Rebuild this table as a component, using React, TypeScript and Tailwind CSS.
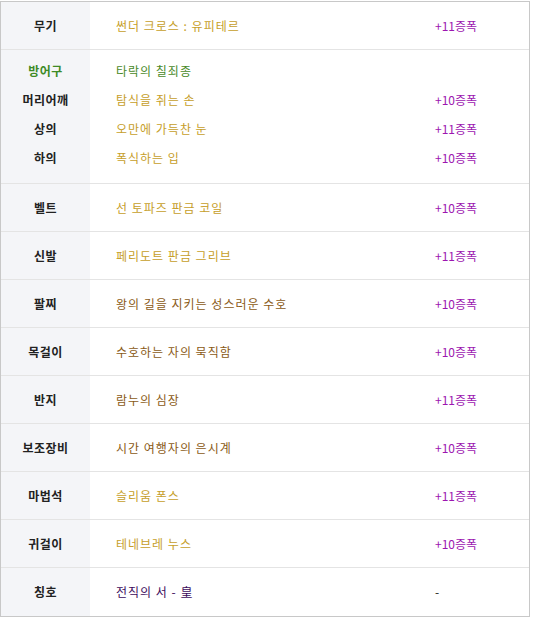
import React from 'react';

type Item = {
  label: string;
  name: string;
  value: string;
  labelClass?: string;
  nameClass: string;
  valueClass?: string;
};

const GOLD = 'text-[#c69e2a]';
const BROWN = 'text-[#8a5a16]';
const PURPLE = 'text-[#9c16b0]';

const armor: Item[] = [
  { label: '방어구', name: '타락의 칠죄종', value: '', labelClass: 'text-[#3d8b26]', nameClass: 'text-[#4a8a2a]' },
  { label: '머리어깨', name: '탐식을 쥐는 손', value: '+10증폭', nameClass: GOLD },
  { label: '상의', name: '오만에 가득찬 눈', value: '+11증폭', nameClass: GOLD },
  { label: '하의', name: '폭식하는 입', value: '+10증폭', nameClass: GOLD },
];

const rows: Item[] = [
  { label: '벨트', name: '선 토파즈 판금 코일', value: '+10증폭', nameClass: GOLD },
  { label: '신발', name: '페리도트 판금 그리브', value: '+11증폭', nameClass: GOLD },
  { label: '팔찌', name: '왕의 길을 지키는 성스러운 수호', value: '+10증폭', nameClass: BROWN },
  { label: '목걸이', name: '수호하는 자의 묵직함', value: '+10증폭', nameClass: BROWN },
  { label: '반지', name: '람누의 심장', value: '+11증폭', nameClass: BROWN },
  { label: '보조장비', name: '시간 여행자의 은시계', value: '+10증폭', nameClass: BROWN },
  { label: '마법석', name: '슬리움 폰스', value: '+11증폭', nameClass: GOLD },
  { label: '귀걸이', name: '테네브레 누스', value: '+10증폭', nameClass: GOLD },
  { label: '칭호', name: '전직의 서 - 皇', value: '-', nameClass: 'text-[#3c0a5c]', valueClass: 'text-[#222]' },
];

const Row: React.FC<{ item: Item; last?: boolean }> = ({ item, last }) => (
  <div className={`flex h-[48px] ${last ? '' : 'border-b border-[#e4e4e4]'}`}>
    <div
      className={`flex w-[89px] items-center justify-center bg-[#f4f5f8] text-[12px] font-bold tracking-[0.5px] ${item.labelClass ?? 'text-[#222]'}`}
    >
      {item.label}
    </div>
    <div className={`flex w-[345px] items-center pl-[26px] tracking-[1px] ${item.nameClass}`}>{item.name}</div>
    <div className={`flex flex-1 items-center ${item.valueClass ?? PURPLE}`}>{item.value}</div>
  </div>
);

export default function App() {
  return (
    <div className="min-h-screen bg-white pt-[1px] text-[12px] font-['Noto_Sans_CJK_KR',sans-serif]">
      <div className="w-[530px] border border-[#c8c8c8]">
        <Row item={{ label: '무기', name: '썬더 크로스 : 유피테르', value: '+11증폭', nameClass: GOLD }} />

        {/* armor set block */}
        <div className="flex border-b border-[#e4e4e4] leading-[29px]">
          <div className="w-[89px] bg-[#f4f5f8] pb-[11px] pt-[6px] text-center text-[12px] font-bold tracking-[0.5px]">
            {armor.map((a) => (
              <div key={a.label} className={a.labelClass ?? 'text-[#222]'}>
                {a.label}
              </div>
            ))}
          </div>
          <div className="w-[345px] pb-[11px] pl-[26px] pt-[6px] tracking-[1px]">
            {armor.map((a) => (
              <div key={a.label} className={a.nameClass}>
                {a.name}
              </div>
            ))}
          </div>
          <div className={`flex-1 pb-[11px] pt-[6px] ${PURPLE}`}>
            {armor.map((a) => (
              <div key={a.label} className="h-[29px]">
                {a.value}
              </div>
            ))}
          </div>
        </div>

        {rows.map((r, i) => (
          <Row key={r.label} item={r} last={i === rows.length - 1} />
        ))}
      </div>
    </div>
  );
}
